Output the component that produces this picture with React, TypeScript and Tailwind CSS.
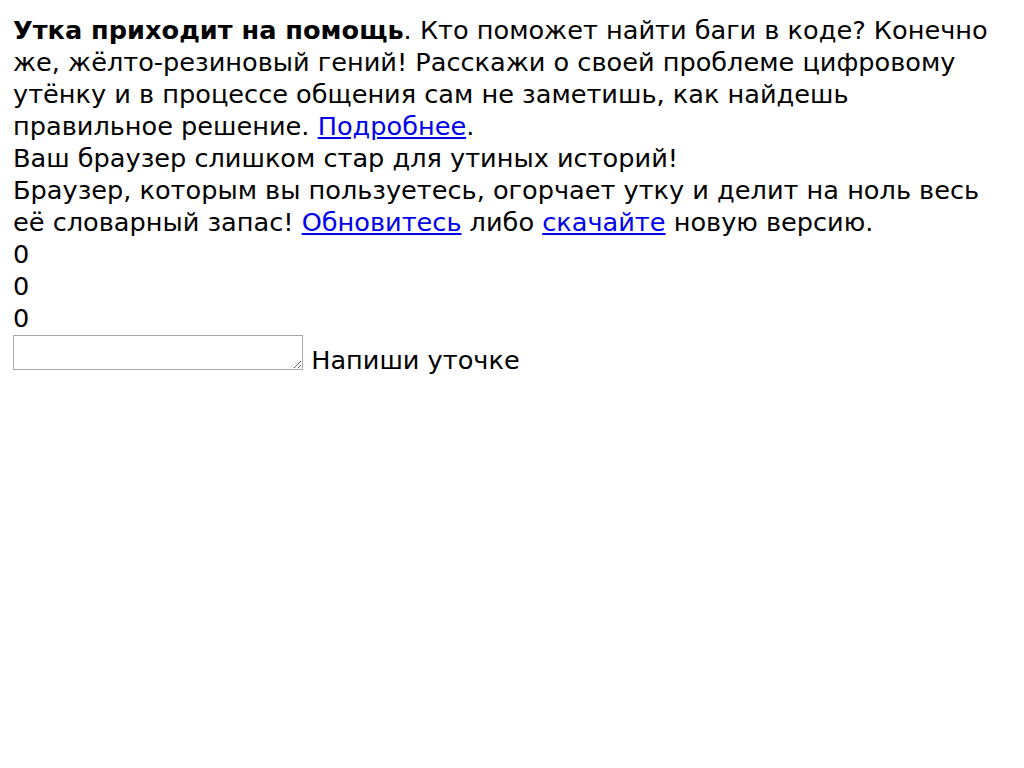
export default function App() {
  return (
    <div
      className="px-[13px] py-[14px] text-[25.6px] leading-[32px] text-black bg-white"
      style={{ fontFamily: '"DejaVu Sans", sans-serif' }}
    >
      <div>
        <b className="font-bold">Утка приходит на помощь</b>. Кто поможет найти баги в коде? Конечно же,
        жёлто-резиновый гений! Расскажи о своей проблеме цифровому утёнку и в процессе общения сам не
        заметишь, как найдешь правильное решение.{" "}
        <a href="#" className="text-[#0000ee] underline">Подробнее</a>.
      </div>
      <div>Ваш браузер слишком стар для утиных историй!</div>
      <div>
        Браузер, которым вы пользуетесь, огорчает утку и делит на ноль весь её словарный запас!{" "}
        <a href="#" className="text-[#0000ee] underline">Обновитесь</a> либо{" "}
        <a href="#" className="text-[#0000ee] underline">скачайте</a> новую версию.
      </div>
      <div>0</div>
      <div>0</div>
      <div>0</div>
      <div>
        <textarea
          rows={1}
          className="inline-block align-baseline w-[290px] h-[35px] translate-y-[1px] border-[1.5px] border-[#a8a8a8] bg-white text-[21px] leading-[25px] p-[3px]"
        />{" "}
        Напиши уточке
      </div>
    </div>
  );
}
